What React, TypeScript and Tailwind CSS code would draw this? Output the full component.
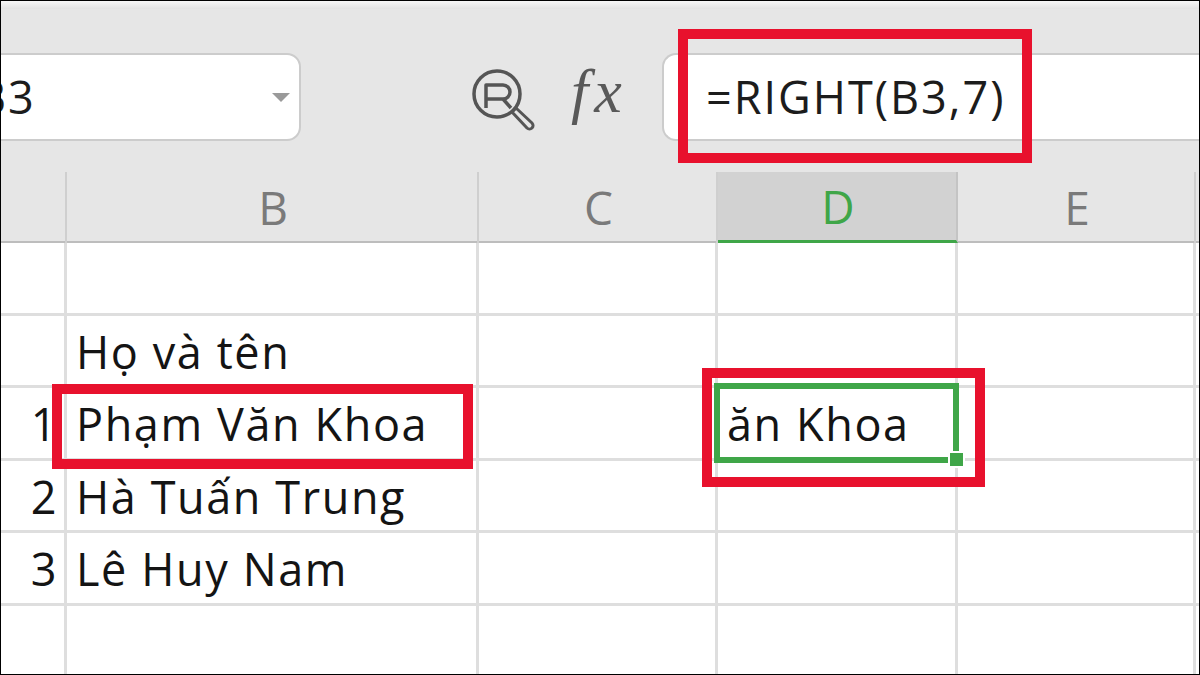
import React from 'react';

const font = { fontFamily: '"Open Sans", "Noto Sans", sans-serif' };

const columns = ['', 'B', 'C', 'D', 'E'];
const rows = [
  { num: '', name: '' },
  { num: '', name: 'Họ và tên' },
  { num: '1', name: 'Phạm Văn Khoa' },
  { num: '2', name: 'Hà Tuấn Trung' },
  { num: '3', name: 'Lê Huy Nam' },
  { num: '', name: '' },
];
const gridCols = 'grid grid-cols-[66px_412px_239px_240px_238px_1fr]';

const SearchIcon = () => (
  <svg width="66" height="66" viewBox="0 0 66 66" fill="none" stroke="#555555" strokeWidth="3.5">
    <circle cx="26" cy="26" r="23" />
    <path d="M15 40V17h17a7 7 0 0 1 0 14H15M32 31l8 9" strokeLinejoin="round" />
    <path d="M41 44l4-4 16 15a3 3 0 0 1-5 5z" strokeWidth="3" strokeLinejoin="round" />
  </svg>
);

export default function App() {
  return (
    <div className="relative w-[1200px] h-[675px] overflow-hidden border border-black bg-white font-medium" style={font}>
      {/* toolbar */}
      <div className="h-[171px] bg-[#e6e6e6] flex flex-col">
        <div className="h-[8px] bg-gradient-to-b from-[#f7f7f7] to-[#e2e2e2]" />
        <div className="flex items-center mt-[44px] h-[88px]">
          <div className="ml-[-30px] w-[330px] h-[88px] rounded-[14px] bg-white border-2 border-[#cccccc] flex items-center justify-between pl-[4px] pr-[9px] overflow-hidden">
            <span className="text-[45px] tracking-[2px] text-[#1c1c1c]">B3</span>
            <span className="w-0 h-0 border-x-[9px] border-x-transparent border-t-[9px] border-t-[#9a9a9a]" />
          </div>
          <div className="ml-[170px] mt-[7px] shrink-0"><SearchIcon /></div>
          <span className="ml-[34px] mb-[12px] w-[66px] shrink-0 text-[62px] tracking-[6px] font-normal text-[#595959] italic leading-none" style={{ fontFamily: '"Liberation Serif", serif' }}>fx</span>
          <div className="ml-[25px] flex-1 h-[88px] rounded-l-[14px] bg-white border-y-2 border-l-2 border-[#cccccc] flex items-center pl-[42px]">
            <span className="text-[45px] tracking-[2px] text-[#1c1c1c]">=RIGHT(B3,7)</span>
          </div>
        </div>
      </div>

      {/* column headers */}
      <div className={`${gridCols} h-[71px] bg-[#e6e6e6] border-b-2 border-[#bdbdbd]`}>
        {columns.map((c, i) => (
          <div
            key={i}
            className={`flex items-center justify-center pl-[2px] text-[46px] border-r-2 ${
              c === 'D'
                ? 'bg-[#d2d2d2] text-[#3fa648] border-r-[#c4c4c4] border-b-[3px] border-b-[#3fa648] h-[71px]'
                : 'text-[#7a7a7a] border-r-[#cfcfcf]'
            }`}
          >
            {c}
          </div>
        ))}
        <div />
      </div>

      {/* sheet rows */}
      {rows.map((r, i) => (
        <div key={i} className={`${gridCols} h-[72.5px] text-[#141414] text-[45px] tracking-[1.6px]`}>
          <div className="border-r-[3px] border-b-[3px] border-[#dedede] flex items-center justify-end pr-[6px] pt-[2px]">{r.num}</div>
          <div className="border-r-[3px] border-b-[3px] border-[#dedede] flex items-center pl-[9px] pt-[2px]">{r.name}</div>
          <div className="border-r-[3px] border-b-[3px] border-[#dedede]" />
          <div className="border-r-[3px] border-b-[3px] border-[#dedede] flex items-center pl-[9px] pt-[2px]">{i === 2 ? 'ăn Khoa' : ''}</div>
          <div className="border-r-[3px] border-b-[3px] border-[#dedede]" />
          <div className="border-b-[3px] border-[#dedede]" />
        </div>
      ))}

      {/* selected cell */}
      <div className="absolute left-[713px] top-[382px] w-[245px] h-[80px] border-[6px] border-[#3fa648]" />
      <div className="absolute left-[947px] top-[450px] w-[17px] h-[17px] bg-[#3fa648] border-[2px] border-white" />

      {/* red callouts */}
      <div className="absolute left-[677px] top-[28px] w-[354px] h-[134px] border-[10px] border-[#e8112d]" />
      <div className="absolute left-[51px] top-[383px] w-[421px] h-[85px] border-[10px] border-[#e8112d]" />
      <div className="absolute left-[701px] top-[367px] w-[283px] h-[119px] border-[10px] border-[#e8112d]" />
    </div>
  );
}
